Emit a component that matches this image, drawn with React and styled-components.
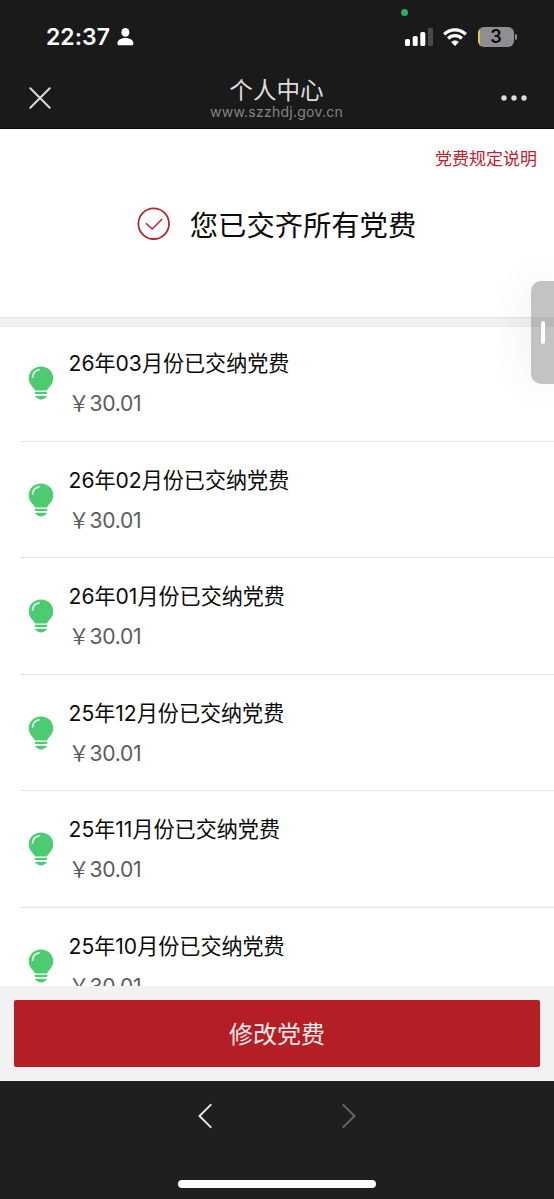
import React from 'react';
import styled, { createGlobalStyle } from 'styled-components';

const GlobalStyle = createGlobalStyle`
  * { box-sizing: border-box; }
  body {
    margin: 0;
    background: #1f1f1f;
    font-family: Inter, "Noto Sans CJK SC", sans-serif;
    overflow: hidden;
  }
  svg { display: block; }
`;

const Screen = styled.div`
  position: relative;
  width: 554px;
  height: 1199px;
  display: flex;
  flex-direction: column;
  background: #fff;
  overflow: hidden;
`;

const TopChrome = styled.header`
  position: relative;
  flex: none;
  height: 129px;
  background: #1a1a1a;
  border-bottom: 1px solid #0b0b0b;
`;

const CameraDot = styled.span`
  position: absolute;
  left: 401px;
  top: 9px;
  width: 7px;
  height: 7px;
  border-radius: 50%;
  background: #2fac57;
`;

const StatusBar = styled.div`
  height: 73px;
  padding: 0 40px 0 46px;
  display: flex;
  align-items: center;
  justify-content: space-between;
`;

const StatusGroup = styled.div`
  display: flex;
  align-items: center;
`;

const Clock = styled.span`
  width: 71px;
  font-size: 22.9px;
  font-weight: 600;
  line-height: 28px;
  color: #fff;
  letter-spacing: 0.1px;
  white-space: nowrap;
`;

const Battery = styled.div`
  position: relative;
  width: 36px;
  height: 20px;
  margin-left: 11px;
  border-radius: 6px;
  background: linear-gradient(90deg, #e8cb3a 0 2px, #8f8f91 2px);
  color: #080808;
  font-size: 18px;
  font-weight: 600;
  line-height: 20px;
  text-align: center;
`;

const BatteryTip = styled.span`
  position: absolute;
  right: -3px;
  top: 7px;
  width: 2px;
  height: 6px;
  border-radius: 0 2px 2px 0;
  background: #8f8f91;
`;

const NavBar = styled.div`
  height: 55px;
  padding: 0 27px 0 28px;
  display: flex;
  align-items: flex-start;
  justify-content: space-between;
`;

const NavIcon = styled.div`
  padding-top: ${(p) => p.$top}px;
`;

const TitleBlock = styled.div`
  display: flex;
  flex-direction: column;
  align-items: center;
  white-space: nowrap;
`;

const PageTitle = styled.div`
  padding-top: 1px;
  font-size: 23.6px;
  line-height: 34px;
  color: #dcdcdc;
`;

const PageHost = styled.div`
  font-size: 14px;
  line-height: 16px;
  margin-top: -4px;
  letter-spacing: 0.25px;
  color: #848484;
`;

const Hero = styled.section`
  flex: none;
  height: 188px;
  padding: 17px 17px 0;
`;

const RulesLink = styled.div`
  height: 26px;
  line-height: 26px;
  text-align: right;
  font-size: 17px;
  color: #b9242e;
`;

const Settled = styled.div`
  margin-top: 31px;
  margin-right: 1px;
  display: flex;
  align-items: center;
  justify-content: center;
  gap: 19px;
  font-size: 28.3px;
  line-height: 42px;
  color: #0c0c0c;
`;

const SettledText = styled.span`
  padding-top: 2px;
  margin-bottom: -2px;
`;

const Gap = styled.div`
  flex: none;
  height: 10px;
  background: #f2f2f2;
  border-top: 1px solid #e3e3e3;
  border-bottom: 1px solid #ebebeb;
`;

const List = styled.main`
  flex: 1;
  min-height: 0;
  overflow: hidden;
  padding-left: 21px;
`;

const Row = styled.div`
  height: 116.5px;
  padding: 22.2px 0 0 7px;
  display: flex;
  align-items: flex-start;
  border-bottom: 1px solid #e2e2e2;

  &:first-child {
    height: 114.6px;
    padding-top: 20.2px;
  }
`;

const BulbBox = styled.div`
  width: 40.6px;
  padding-top: 19.2px;
`;

const RowTitle = styled.div`
  font-size: 21.1px;
  line-height: 34px;
  color: #0c0c0c;
  white-space: nowrap;
  letter-spacing: -0.02px;
`;

const Amount = styled.div`
  margin-top: 5.8px;
  font-size: 21.1px;
  line-height: 34px;
  color: #5c5c5c;
  white-space: nowrap;
  letter-spacing: -0.25px;
`;

const ActionBar = styled.div`
  flex: none;
  height: 95px;
  padding: 14px 14px 0;
  background: #f2f2f2;
`;

const ActionButton = styled.button`
  display: block;
  width: 526px;
  height: 67px;
  padding: 2px 0 0;
  border: 0;
  border-radius: 2px;
  background: #b61e25;
  color: #f8eeee;
  font-family: inherit;
  font-size: 24px;
  line-height: 65px;
`;

const BottomChrome = styled.footer`
  flex: none;
  height: 118px;
  background: #1f1f1f;
  display: flex;
  flex-direction: column;
  align-items: center;
`;

const History = styled.div`
  height: 99px;
  padding-top: 22px;
  display: flex;
  gap: 130px;
`;

const HomeIndicator = styled.div`
  width: 198px;
  height: 8px;
  border-radius: 4px;
  background: #fff;
`;

const SideHandle = styled.div`
  position: absolute;
  right: 0;
  top: 281px;
  width: 23px;
  height: 103px;
  border-radius: 10px 0 0 10px;
  background: linear-gradient(#c4c2c3 0 36px, #b9b7b8 36px 46px, #c4c2c3 46px);
  box-shadow: 0 0 44px rgba(0, 0, 0, 0.09);
`;

const Grip = styled.span`
  position: absolute;
  left: 10px;
  top: 40px;
  width: 4px;
  height: 23px;
  border-radius: 2px;
  background: #fff;
`;

const Person = () => (
  <svg width="17" height="18" viewBox="0 0 17 18" fill="#fff">
    <ellipse cx="8.4" cy="4.4" rx="4" ry="4.3" />
    <path d="M.4 15.4c0-3.1 3.2-5.4 8-5.4s8 2.3 8 5.4c0 1.3-.7 1.900-2 1.900h-12c-1.300 0-2-.6-2-1.900Z" />
  </svg>
);

const Signal = () => (
  <svg width="28" height="18" viewBox="0 0 28 18" fill="#fff">
    <rect x="0" y="11" width="5" height="7" rx="1.6" />
    <rect x="7.7" y="8" width="5" height="10" rx="1.6" />
    <rect x="15.3" y="4" width="5" height="14" rx="1.6" />
    <rect x="23" y="0" width="5" height="18" rx="1.6" fill="#4a4a4a" />
  </svg>
);

const WifiIcon = styled.svg`
  margin-left: 10px;
`;

const Wifi = () => (
  <WifiIcon width="24" height="18" viewBox="0 0 24 18" fill="none" stroke="#fff" strokeWidth="3.3">
    <path d="M1.200 6.300c6-6 15.600-6 21.600 0" />
    <path d="M5.200 10.500c3.900-3.800 9.700-3.800 13.600 0" />
    <path d="M8.100 14.100c2.200-2.200 5.600-2.200 7.800 0L12 17.900Z" fill="#fff" stroke="none" />
  </WifiIcon>
);

const Close = () => (
  <svg width="24" height="24" viewBox="0 0 24 24" stroke="#d9d9d9" strokeWidth="2" strokeLinecap="round">
    <path d="M2.300 2.300 21.700 21.700M21.700 2.300 2.300 21.700" />
  </svg>
);

const More = () => (
  <svg width="26" height="6" viewBox="0 0 26 6" fill="#dcdcdc">
    <circle cx="3" cy="3" r="2.700" />
    <circle cx="13" cy="3" r="2.700" />
    <circle cx="23" cy="3" r="2.700" />
  </svg>
);

const CheckCircle = () => (
  <svg width="34" height="34" viewBox="0 0 34 34" fill="none" stroke="#b9242e">
    <circle cx="16.700" cy="16.700" r="15.300" strokeWidth="1.800" />
    <path d="M9 16.200l6.200 5.800L25.100 12" strokeWidth="1.500" />
  </svg>
);

const Bulb = () => (
  <svg width="26" height="34" viewBox="0 0 26 34">
    <path
      fill="#4ccb70"
      d="M13 .5C6 .5.800 5.500.800 12.300c0 4.700 2.500 7.300 4.500 9.500.8.900 1.200 2 1.700 2.600h12c.5-.6.900-1.700 1.700-2.600 2-2.200 4.500-4.800 4.500-9.500C25.200 5.500 20 .5 13 .5Z"
    />
    <path fill="none" stroke="#dcf8e4" strokeWidth="1.700" strokeLinecap="round" d="M4.600 11.200c.3-4 2.600-6.600 6.400-7.300" />
    <path fill="#4ccb70" d="M6.800 25.700h12.400v1c0 .8-.5 1.400-1.200 1.400H8c-.7 0-1.200-.6-1.200-1.400ZM8 29.700h10c.5 0 .8.300.8.700 0 .6-.7 1-1.500 1.200-.8.900-1.700 1.900-4.300 1.900s-3.500-1-4.300-1.900c-.8-.2-1.500-.6-1.500-1.200 0-.4.300-.7.800-.7Z" />
  </svg>
);

const Chevron = ({ color, forward }) => (
  <svg width="14" height="26" viewBox="0 0 14 26" fill="none" stroke={color} strokeWidth="2" strokeLinecap="round" strokeLinejoin="round">
    <path d={forward ? 'M1.300 1.900 12.500 13 1.300 24.100' : 'M12.700 1.900 1.500 13 12.700 24.100'} />
  </svg>
);

const months = ['26年03', '26年02', '26年01', '25年12', '25年11', '25年10'];

export default function App() {
  return (
    <Screen>
      <GlobalStyle />
      <TopChrome>
        <CameraDot />
        <StatusBar>
          <StatusGroup>
            <Clock>22:37</Clock>
            <Person />
          </StatusGroup>
          <StatusGroup>
            <Signal />
            <Wifi />
            <Battery>
              3
              <BatteryTip />
            </Battery>
          </StatusGroup>
        </StatusBar>
        <NavBar>
          <NavIcon $top={13}><Close /></NavIcon>
          <TitleBlock>
            <PageTitle>个人中心</PageTitle>
            <PageHost>www.szzhdj.gov.cn</PageHost>
          </TitleBlock>
          <NavIcon $top={22}><More /></NavIcon>
        </NavBar>
      </TopChrome>
      <Hero>
        <RulesLink>党费规定说明</RulesLink>
        <Settled>
          <CheckCircle />
          <SettledText>您已交齐所有党费</SettledText>
        </Settled>
      </Hero>
      <Gap />
      <List>
        {months.map((month) => (
          <Row key={month}>
            <BulbBox><Bulb /></BulbBox>
            <div>
              <RowTitle>{month}月份已交纳党费</RowTitle>
              <Amount>￥30.01</Amount>
            </div>
          </Row>
        ))}
      </List>
      <ActionBar>
        <ActionButton>修改党费</ActionButton>
      </ActionBar>
      <BottomChrome>
        <History>
          <Chevron color="#e6e6e6" />
          <Chevron color="#666" forward />
        </History>
        <HomeIndicator />
      </BottomChrome>
      <SideHandle>
        <Grip />
      </SideHandle>
    </Screen>
  );
}
